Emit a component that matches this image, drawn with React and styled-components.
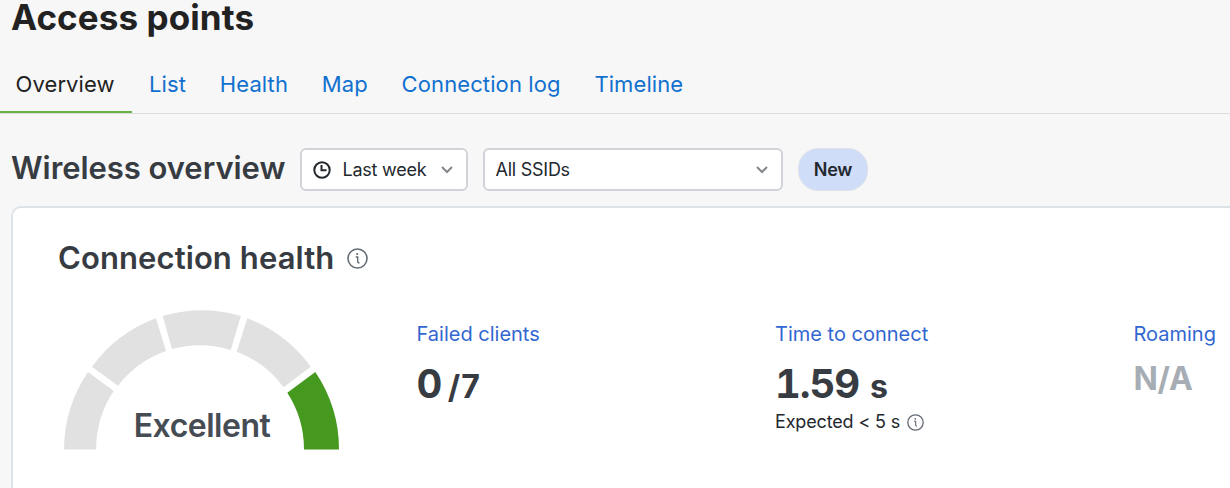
import React from 'react';
import styled, { createGlobalStyle } from 'styled-components';

const GlobalStyle = createGlobalStyle`
  * {
    box-sizing: border-box;
  }

  body {
    margin: 0;
    background: #f7f7f7;
    color: #23282e;
    font-family: Inter, 'Liberation Sans', sans-serif;
    overflow: hidden;
  }
`;

const Page = styled.div`
  width: 1230px;
  height: 488px;
  overflow: hidden;
  display: flex;
  flex-direction: column;

  > * {
    flex-shrink: 0;
  }
`;

const PageTitle = styled.h1`
  margin: 0;
  padding-left: 11px;
  height: 57px;
  font-size: 35px;
  font-weight: 700;
  line-height: 35px;
  letter-spacing: 0.1px;
  color: #222;
  white-space: nowrap;
`;

const Tabs = styled.nav`
  display: flex;
  height: 57px;
  border-bottom: 1px solid #dadcdd;
`;

const Tab = styled.a`
  height: 56px;
  padding: 0 ${props => (props.$active ? '17.6px 0 15.5px' : '17px 0 16.8px')};
  border-bottom: 2px solid ${props => (props.$active ? '#67b346' : 'transparent')};
  color: ${props => (props.$active ? '#222' : '#1170cf')};
  font-size: 22px;
  line-height: 55px;
  letter-spacing: 0.1px;
  white-space: nowrap;
`;

const FilterBar = styled.div`
  display: flex;
  align-items: flex-start;
  height: 43px;
  margin: 34px 0 15px 12px;
`;

const Heading = styled.h2`
  margin: 0 0 0 -1px;
  width: 289px;
  flex-shrink: 0;
  color: #373c42;
  font-size: 31px;
  font-weight: 600;
  line-height: 40px;
  letter-spacing: ${props => props.$spacing || '0.1px'};
  white-space: nowrap;
`;

const Select = styled.button`
  display: flex;
  align-items: center;
  width: ${props => props.$width};
  height: 43px;
  margin-right: 15px;
  padding: 0 13px 0 11px;
  border: 2px solid #d0d4d9;
  border-radius: 6px;
  background: #fff;
  color: #23282e;
  font-family: inherit;
  font-size: 18px;
  white-space: nowrap;

  svg:last-child {
    margin-left: auto;
  }
`;

const SelectLabel = styled.span`
  margin-left: ${props => (props.$afterIcon ? '11.5px' : '-0.5px')};
  letter-spacing: -0.25px;
`;

const Badge = styled.span`
  width: 70px;
  height: 43px;
  border: 1px solid #dfe3e9;
  border-radius: 20px;
  background: #d0ddf8;
  font-size: 18px;
  font-weight: 600;
  line-height: 42px;
  letter-spacing: -0.2px;
  text-align: center;
`;

const Card = styled.section`
  width: 1240px;
  height: 320px;
  margin-left: 11px;
  padding: 30px 0 0 46px;
  border: 2px solid #dee3e8;
  border-radius: 10px;
  background: #fff;
`;

const CardHeader = styled.div`
  display: flex;
  align-items: center;
  height: 40px;
`;

const CardBody = styled.div`
  display: flex;
  padding: 32px 0 0 5px;

  > * {
    flex-shrink: 0;
  }
`;

const Gauge = styled.div`
  display: grid;
  width: 276px;
  height: 141px;
  margin-right: 76.5px;

  > * {
    grid-area: 1 / 1;
  }
`;

const GaugeLabel = styled.strong`
  align-self: end;
  justify-self: center;
  padding-bottom: 5px;
  color: #464c54;
  font-size: 32px;
  font-weight: 600;
  line-height: 40px;
  letter-spacing: -0.5px;
`;

const Metric = styled.div`
  width: 358.5px;
  padding-top: 9px;
  white-space: nowrap;
`;

const MetricName = styled.a`
  display: block;
  color: #3267d1;
  font-size: 20px;
  line-height: 30px;
`;

const MetricValue = styled.div`
  display: flex;
  align-items: baseline;
  gap: ${props => props.$gap};
  height: 60px;
  padding-top: 11px;
  color: #373c42;
  font-size: 40px;
  font-weight: 700;
  font-variant-numeric: tabular-nums;
  letter-spacing: ${props => props.$spacing || '0'};
  line-height: 48px;
`;

const Unit = styled.span`
  font-size: 32px;
`;

const Unavailable = styled.div`
  padding-top: 10px;
  color: #a7adb4;
  font-size: 32px;
  font-weight: 700;
  line-height: 40px;
  letter-spacing: -0.3px;
`;

const Expected = styled.div`
  display: flex;
  align-items: center;
  gap: 7px;
  font-size: 18px;
  line-height: 26px;
  letter-spacing: -0.15px;
`;

const ClockIcon = () => (
  <svg width="18" height="18" viewBox="0 0 18 18" fill="none" stroke="#23282e" strokeWidth="2">
    <circle cx="9" cy="9" r="7.7" />
    <path d="M8.5 4v5.2h5" />
  </svg>
);

const ChevronIcon = () => (
  <svg width="12" height="8" viewBox="0 0 12 8" fill="none" stroke="#84878b" strokeWidth="2">
    <path d="M1 1l5 5 5-5" />
  </svg>
);

const InfoIcon = ({ size }) => (
  <svg width={size} height={size} viewBox="0 0 21 21" fill="none" stroke="#656b74" strokeWidth="1.6">
    <circle cx="10.5" cy="10.5" r="9.5" />
    <path d="M8.7 9h2v5.5M10.7 14.8h1.8" strokeWidth="1.4" />
    <circle cx="10.2" cy="6" r="1.1" fill="#656b74" stroke="none" />
  </svg>
);

const segments = [
  'M0 139.6A138.5 138.5 0 0 1 24 62L49.7 81A104 104 0 0 0 32.2 139.6Z',
  'M28 56.7A138.5 138.5 0 0 1 92 8.3L102 41A104 104 0 0 0 54 75.7Z',
  'M98.7 6A138.5 138.5 0 0 1 176.8 6L166.8 40A104 104 0 0 0 108 39Z',
  'M183.3 8.3A138.5 138.5 0 0 1 246.7 56.7L219.6 77.3A104 104 0 0 0 172.7 41.7Z',
  'M251.3 62A138.5 138.5 0 0 1 275 139.6L240 139.6A104 104 0 0 0 223.3 82.7Z',
];

const HealthGauge = () => (
  <Gauge>
    <svg width="276" height="141" viewBox="0 0 276 141">
      {segments.map((d, i) => (
        <path key={d} d={d} fill={i === 4 ? '#45991f' : '#e1e1e1'} />
      ))}
    </svg>
    <GaugeLabel>Excellent</GaugeLabel>
  </Gauge>
);

const tabs = ['Overview', 'List', 'Health', 'Map', 'Connection log', 'Timeline'];

const App = () => {
  return (
    <Page>
      <GlobalStyle />
      <PageTitle>Access points</PageTitle>
      <Tabs>
        {tabs.map(tab => (
          <Tab key={tab} $active={tab === 'Overview'}>{tab}</Tab>
        ))}
      </Tabs>

      <FilterBar>
        <Heading $spacing="-0.05px">Wireless overview</Heading>
        <Select $width="168px">
          <ClockIcon />
          <SelectLabel $afterIcon>Last week</SelectLabel>
          <ChevronIcon />
        </Select>
        <Select $width="300px">
          <SelectLabel>All SSIDs</SelectLabel>
          <ChevronIcon />
        </Select>
        <Badge>New</Badge>
      </FilterBar>

      <Card>
        <CardHeader>
          <Heading>Connection health</Heading>
          <InfoIcon size={21} />
        </CardHeader>
        <CardBody>
          <HealthGauge />
          <Metric>
            <MetricName>Failed clients</MetricName>
            <MetricValue $gap="5.5px">
              0<Unit>/7</Unit>
            </MetricValue>
          </Metric>
          <Metric>
            <MetricName>Time to connect</MetricName>
            <MetricValue $gap="11px" $spacing="-1.1px">
              1.59<Unit>s</Unit>
            </MetricValue>
            <Expected>
              Expected &lt; 5 s
              <InfoIcon size={17} />
            </Expected>
          </Metric>
          <Metric>
            <MetricName>Roaming</MetricName>
            <Unavailable>N/A</Unavailable>
          </Metric>
        </CardBody>
      </Card>
    </Page>
  );
};

export default App;
